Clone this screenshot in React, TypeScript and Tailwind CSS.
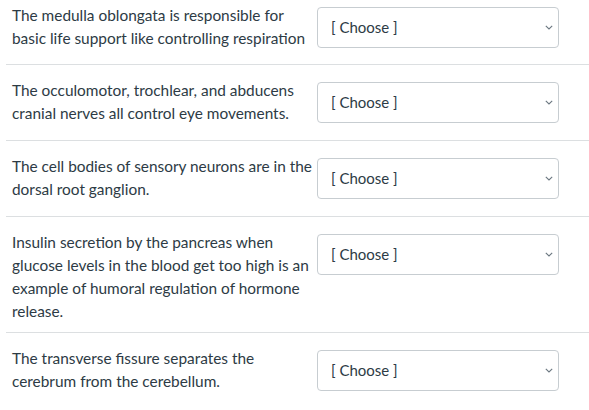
import React from 'react';

const questions = [
  'The medulla oblongata is responsible for basic life support like controlling respiration',
  'The occulomotor, trochlear, and abducens cranial nerves all control eye movements.',
  'The cell bodies of sensory neurons are in the dorsal root ganglion.',
  'Insulin secretion by the pancreas when glucose levels in the blood get too high is an example of humoral regulation of hormone release.',
  'The transverse fissure separates the cerebrum from the cerebellum.',
];

function ChooseBox() {
  return (
    <div className="mt-[3px] flex h-[41px] w-[242px] shrink-0 items-center justify-between rounded-[4px] border border-[#c7cdd1] bg-white pl-[13px] pr-[5px]">
      <span className="text-[15px] text-[#2d3b45]">[ Choose ]</span>
      <svg width="8" height="5" viewBox="0 0 8 5" fill="none">
        <path d="M0.8 0.8 L4 4 L7.2 0.8" stroke="#6b7780" strokeWidth="1.1" />
      </svg>
    </div>
  );
}

export default function App() {
  return (
    <div
      className="h-[410px] w-[589px] overflow-hidden bg-white text-[#2d3b45]"
      style={{ fontFamily: 'Lato, "Open Sans", sans-serif' }}
    >
      <div className="ml-[6px]">
        {questions.map((q, i) => (
          <div
            key={i}
            className={
              i === 0
                ? 'flex items-start gap-[1px] pb-[14px] pl-[6px] pt-[4px]'
                : i === 3
                ? 'flex items-start gap-[1px] border-t border-[#dcdfe1] pb-[9px] pl-[6px] pt-[14px]'
                : 'flex items-start gap-[1px] border-t border-[#dcdfe1] pb-[15px] pl-[6px] pt-[14px]'
            }
          >
            <p className="w-[304px] shrink-0 text-[15.4px] leading-[23px]">{q}</p>
            <ChooseBox />
          </div>
        ))}
      </div>
    </div>
  );
}
